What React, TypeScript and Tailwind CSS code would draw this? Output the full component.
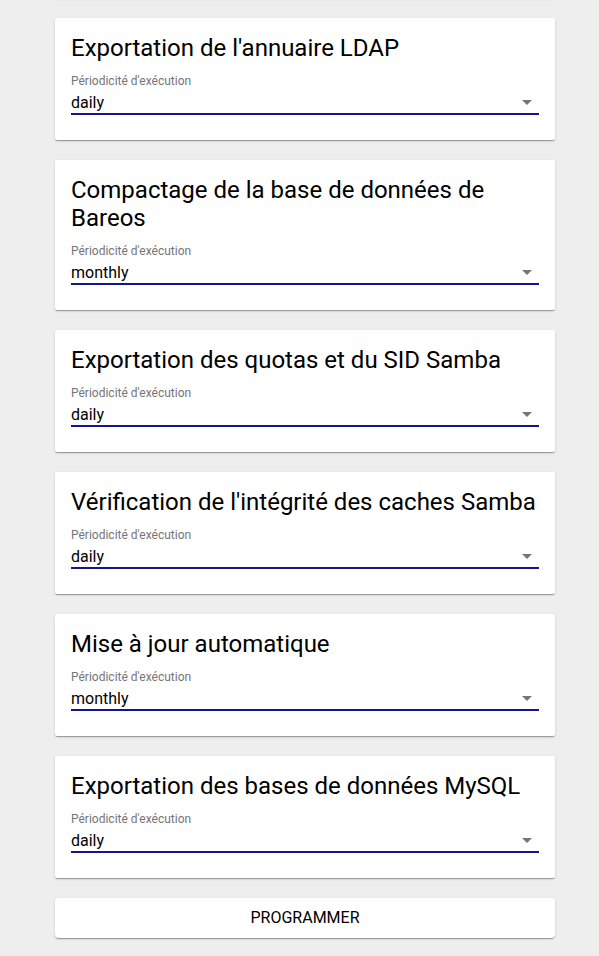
const tasks = [
  { title: "Exportation de l'annuaire LDAP", value: "daily" },
  { title: "Compactage de la base de données de Bareos", value: "monthly" },
  { title: "Exportation des quotas et du SID Samba", value: "daily" },
  { title: "Vérification de l'intégrité des caches Samba", value: "daily" },
  { title: "Mise à jour automatique", value: "monthly" },
  { title: "Exportation des bases de données MySQL", value: "daily" },
];

const cardShadow =
  "shadow-[0_2px_1px_-1px_rgba(0,0,0,0.2),0_1px_1px_0_rgba(0,0,0,0.14),0_1px_3px_0_rgba(0,0,0,0.12)]";

function TaskCard({ title, value }: { title: string; value: string }) {
  return (
    <div className={`bg-white rounded-[2px] px-4 pt-4 pb-[25px] ${cardShadow}`}>
      <h2 className="text-[24px] leading-[28px] font-normal text-black">{title}</h2>
      <div className="mt-[12px] text-[12px] leading-[14px] text-[#757575]">
        Périodicité d'exécution
      </div>
      <div className="mt-[5px] flex items-center justify-between border-b-2 border-[#14148c] pb-[1px]">
        <span className="text-[16px] leading-[19px] text-black">{value}</span>
        <svg
          viewBox="0 0 24 24"
          className="w-6 h-6 -my-[3px] -translate-y-[1px] fill-[rgba(0,0,0,0.54)]"
        >
          <path d="M7 10l5 5 5-5z" />
        </svg>
      </div>
    </div>
  );
}

export default function App() {
  return (
    <div
      className="min-h-[956px] bg-[#eeeeee] overflow-hidden"
      style={{ fontFamily: "Roboto, 'Liberation Sans', sans-serif" }}
    >
      <div className="ml-[55px] w-[500px] flex flex-col gap-5 pb-8">
        <div className={`bg-white h-[20px] -mt-[22px] rounded-[2px] ${cardShadow}`} />
        {tasks.map((t) => (
          <TaskCard key={t.title} title={t.title} value={t.value} />
        ))}
        <button
          className={`bg-white h-10 rounded-[4px] text-[16px] text-black uppercase ${cardShadow}`}
        >
          Programmer
        </button>
      </div>
    </div>
  );
}
